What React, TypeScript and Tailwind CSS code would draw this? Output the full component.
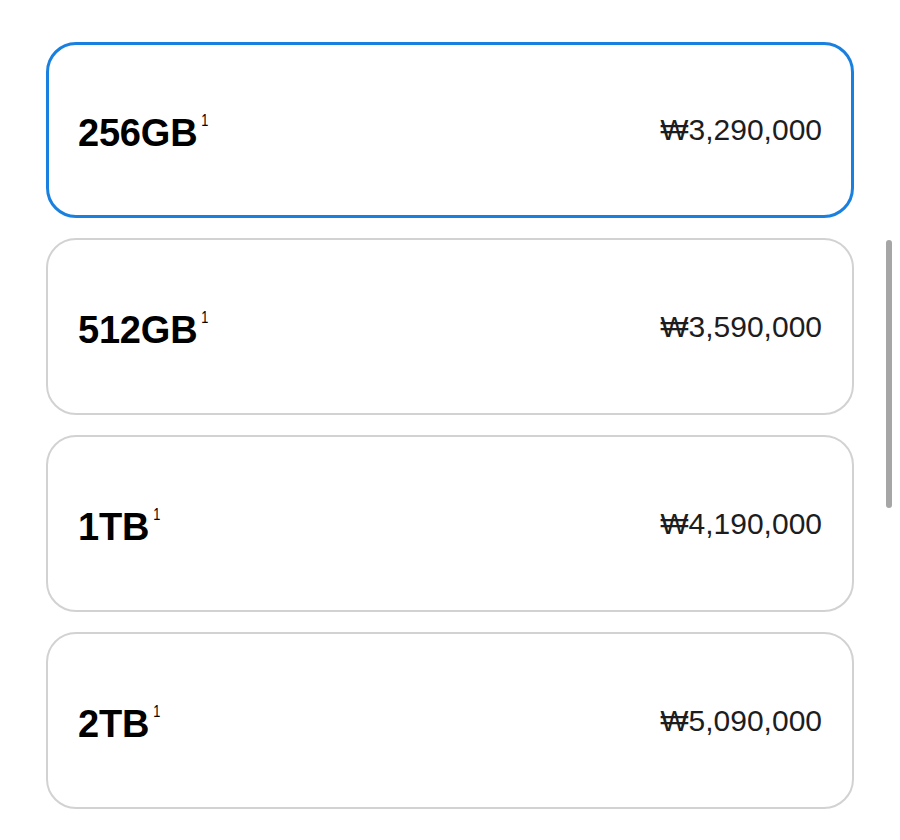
import React from "react";

const items = [
  { size: "256GB", price: "₩3,290,000", selected: true },
  { size: "512GB", price: "₩3,590,000", selected: false },
  { size: "1TB", price: "₩4,190,000", selected: false },
  { size: "2TB", price: "₩5,090,000", selected: false },
];

export default function App() {
  return (
    <div
      className="relative w-[900px] h-[840px] bg-white overflow-hidden"
      style={{ fontFamily: '"Liberation Sans", Arial, sans-serif' }}
    >
      <div className="flex flex-col gap-[20px] pt-[42px] px-[46px]">
        {items.map((it) =>
          it.selected ? (
            <div
              key={it.size}
              className="h-[176px] rounded-[30px] border-[3px] border-[#1a80e0] flex items-center justify-between pl-[29px] pr-[29px]"
            >
              <Label size={it.size} />
              <Price price={it.price} />
            </div>
          ) : (
            <div
              key={it.size}
              className="h-[177px] rounded-[30px] border-2 border-[#d2d2d2] flex items-center justify-between pl-[30px] pr-[30px]"
            >
              <Label size={it.size} />
              <Price price={it.price} />
            </div>
          )
        )}
      </div>
      <div className="absolute left-[886px] top-[240px] w-[6px] h-[268px] rounded-full bg-[#a6a6a6]" />
    </div>
  );
}

function Label({ size }: { size: string }) {
  return (
    <div className="flex items-start text-black mt-[6px]">
      <span className="text-[38px] font-bold leading-none tracking-[-0.2px]">{size}</span>
      <span className="text-[17px] leading-none ml-[3px] -mt-[2px] scale-x-75">1</span>
    </div>
  );
}

function Price({ price }: { price: string }) {
  return (
    <span className="text-[30px] text-[#1d1d1f] leading-none">{price}</span>
  );
}
